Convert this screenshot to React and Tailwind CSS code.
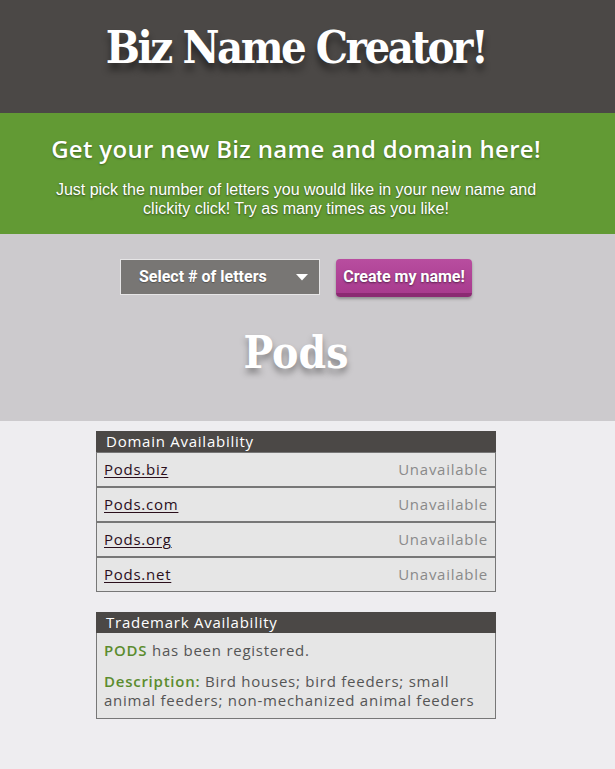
export default function App() {
  const domains = ["Pods.biz", "Pods.com", "Pods.org", "Pods.net"];
  return (
    <div className="min-h-[769px] bg-[#eeedf0] font-['Open_Sans',sans-serif]">
      <header className="bg-[#4b4846] h-[113px]">
        <div className="w-[592px] pt-[18px] text-center">
          <h1 className="font-['DejaVu_Serif_Condensed','DejaVu_Serif',serif] [font-stretch:condensed] font-bold text-white text-[45px] leading-[60px] tracking-[-2.5px] [text-shadow:0_7px_7px_rgba(0,0,0,0.45)]">
            Biz Name Creator!
          </h1>
        </div>
      </header>
      <section className="bg-[#629a34] h-[121px]">
        <div className="w-[592px] text-center text-white">
          <h2 className="pt-[21px] text-[24px] leading-[30px] font-semibold tracking-[0.3px] [text-shadow:0_1px_2px_rgba(0,0,0,0.35)]">
            Get your new Biz name and domain here!
          </h2>
          <p className="mt-[16px] font-['Liberation_Sans',sans-serif] text-[16px] leading-[19px] [text-shadow:0_1px_2px_rgba(0,0,0,0.5)]">
            Just pick the number of letters you would like in your new name and
            <br />
            clickity click! Try as many times as you like!
          </p>
        </div>
      </section>
      <section className="bg-[#cccacd] h-[187px]">
        <div className="w-[592px] flex flex-col items-center">
          <div className="flex items-start gap-4 pt-[25px]">
            <div className="w-[200px] h-[36px] bg-[#787674] border border-[#e6e5e6] flex items-center justify-between pl-[18px] pr-[11px] font-['Roboto',sans-serif] font-bold text-white text-[16px] [text-shadow:0_1px_1px_rgba(0,0,0,0.3)]">
              <span>Select # of letters</span>
              <svg width="12" height="7" viewBox="0 0 12 7">
                <path d="M0 0 L6 6.5 L12 0 Z" fill="#fff" />
              </svg>
            </div>
            <button className="w-[136px] h-[38px] rounded-[4px] bg-gradient-to-b from-[#b84d9f] to-[#a83b8e] border-b-[4px] border-[#8b2a72] shadow-[0_2px_3px_rgba(0,0,0,0.3)] font-['Roboto',sans-serif] font-bold text-white text-[16px] [text-shadow:0_1px_2px_rgba(0,0,0,0.5)] pt-[2px] whitespace-nowrap">
              Create my name!
            </button>
          </div>
          <div className="mt-[28px] font-['DejaVu_Serif_Condensed','DejaVu_Serif',serif] [font-stretch:condensed] font-bold text-white text-[44px] leading-[56px] [text-shadow:0_5px_6px_rgba(0,0,0,0.35)]">
            Pods
          </div>
        </div>
      </section>
      <main className="w-[592px] pt-[10px] flex flex-col items-center tracking-[0.75px]">
        <div className="w-[400px]">
          <div className="bg-[#4b4846] text-white text-[15px] leading-[21px] px-[10px]">
            Domain Availability
          </div>
          {domains.map((d) => (
            <div
              key={d}
              className="h-[35px] bg-[#e6e6e6] border border-[#777777] flex items-center justify-between px-[7px] text-[15px]"
            >
              <a href="#" className="text-[#2b0f1c] underline underline-offset-2">
                {d}
              </a>
              <span className="text-[#8a8a8a]">Unavailable</span>
            </div>
          ))}
        </div>
        <div className="w-[400px] mt-[20px]">
          <div className="bg-[#4b4846] text-white text-[15px] leading-[21px] px-[10px]">
            Trademark Availability
          </div>
          <div className="bg-[#e6e6e6] border border-t-0 border-[#777777] px-[7px] pt-[8px] pb-[8px] text-[15px] leading-[19px] text-[#555555]">
            <p>
              <span className="text-[#5b8c2e] font-semibold">PODS</span> has been registered.
            </p>
            <p className="mt-[12px]">
              <span className="text-[#5b8c2e] font-semibold">Description:</span>
              <span> Bird houses; bird feeders; small</span>
              <br />
              <span>animal feeders; non-mechanized animal feeders</span>
            </p>
          </div>
        </div>
      </main>
    </div>
  );
}
